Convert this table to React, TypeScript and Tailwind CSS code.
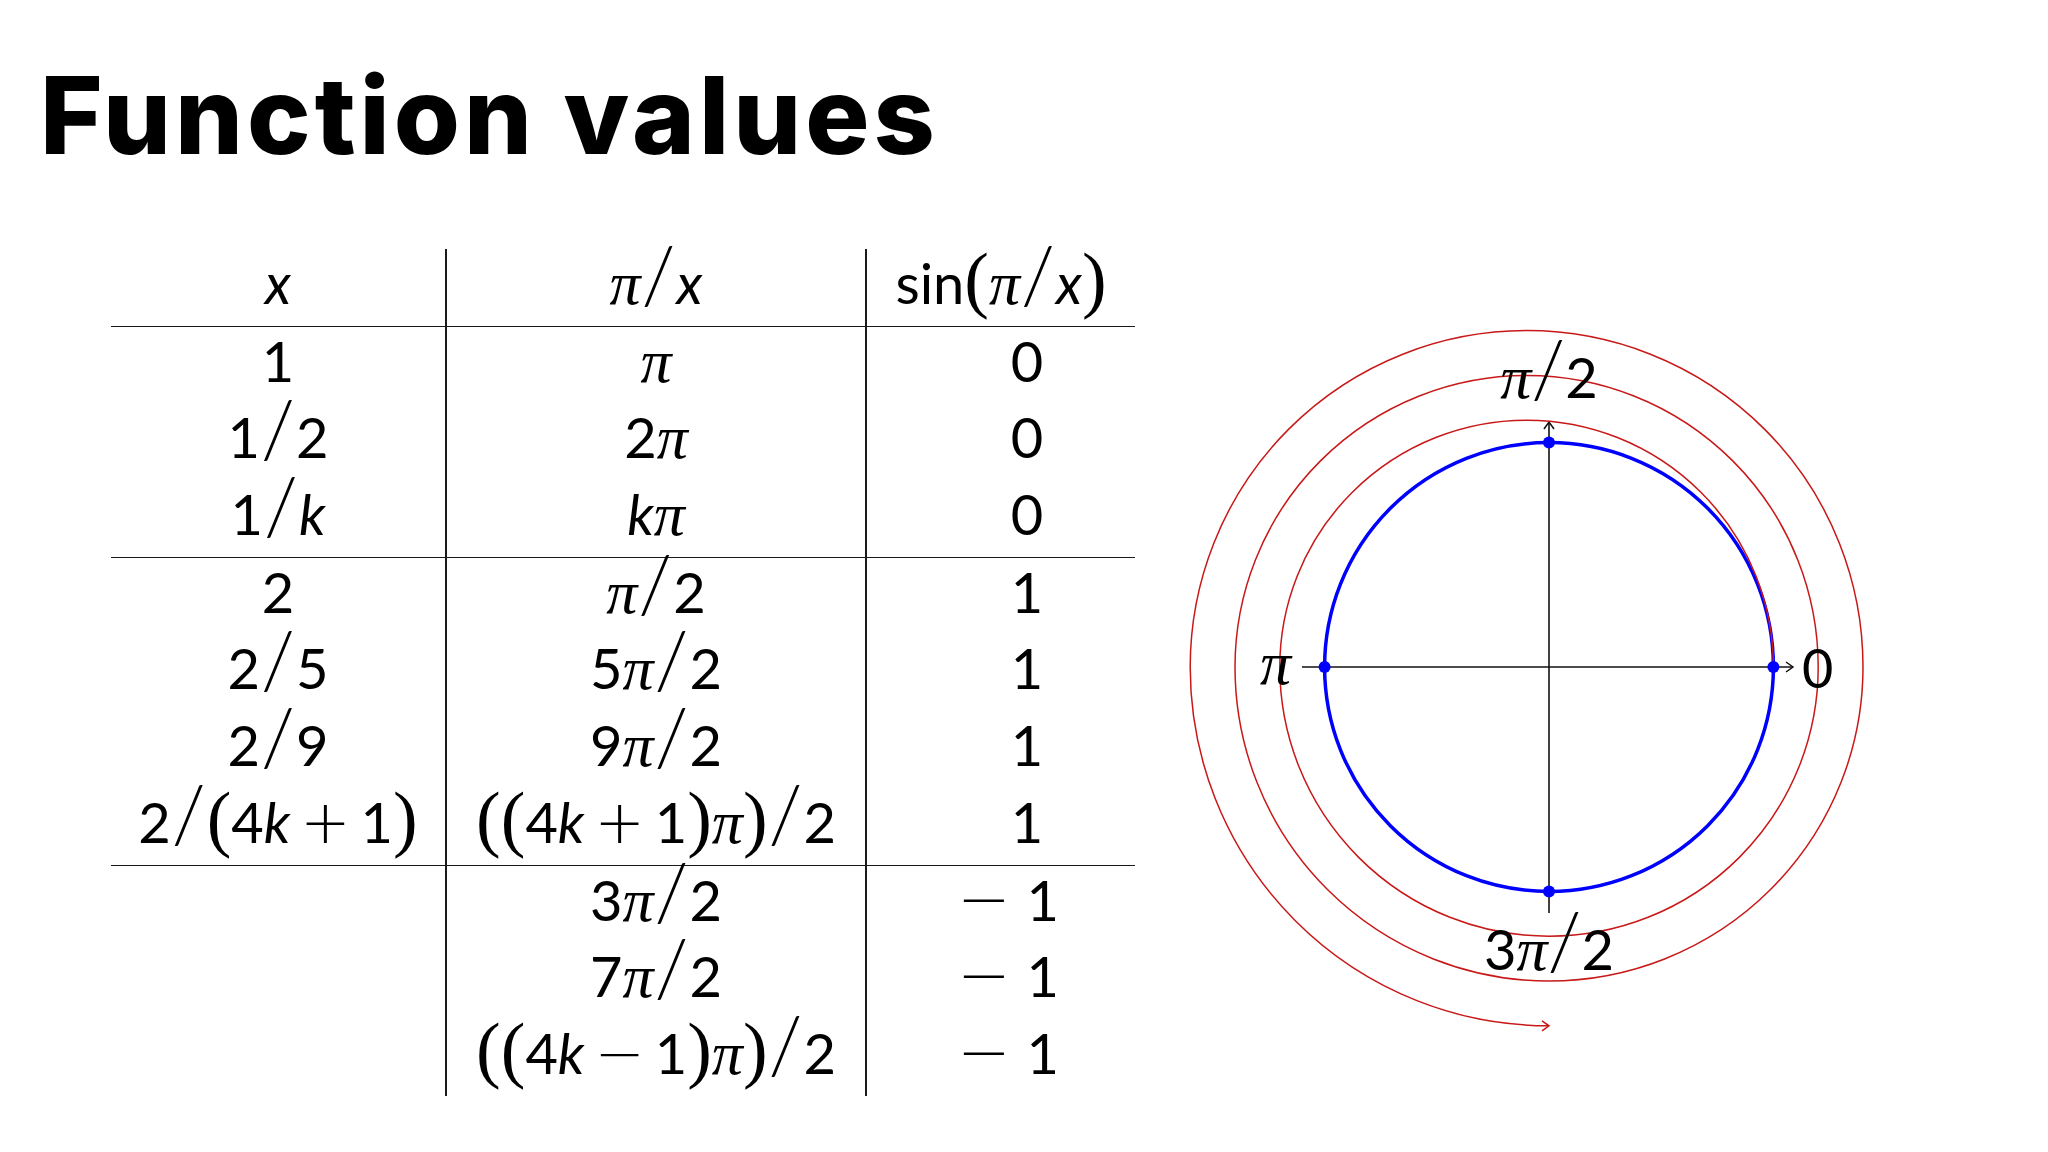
import React from "react";

type N = { children?: React.ReactNode };

const I = ({ children }: N) => <span className="italic">{children}</span>;
const Pi = () => (
  <span className="font-['Liberation_Serif',serif] italic text-[62px] leading-[0]">π</span>
);
const Sl = () => (
  <span className="font-['Lato',sans-serif] font-light text-[78px] leading-[0] mx-[1px]">/</span>
);
const L = () => (
  <span className="font-['Liberation_Serif',serif] text-[74px] leading-[0]">(</span>
);
const R = () => (
  <span className="font-['Liberation_Serif',serif] text-[74px] leading-[0]">)</span>
);
const Op = ({ children }: N) => (
  <span className="font-['DejaVu_Sans',sans-serif] font-extralight text-[60px] leading-[0] mx-[10px]">{children}</span>
);
const Neg = () => (
  <>
    <span className="font-['DejaVu_Sans',sans-serif] font-extralight text-[64px] leading-[0]">−</span>
    <span className="ml-[16px]">1</span>
  </>
);

type RowProps = {
  a?: React.ReactNode;
  b: React.ReactNode;
  c: React.ReactNode;
  cPad?: string;
  top?: boolean;
};

function Row({ a, b, c, cPad = "", top = false }: RowProps) {
  return (
    <div
      className={
        "grid grid-cols-[334px_422px_268px] h-[77px] " +
        (top ? "border-t-[1.5px] border-[#1a1a1a]" : "")
      }
    >
      <div className="text-center leading-[1.2] whitespace-nowrap">{a}</div>
      <div className="text-center leading-[1.2] whitespace-nowrap border-x-2 border-[#1a1a1a]">{b}</div>
      <div className={"text-center leading-[1.2] whitespace-nowrap " + cPad}>{c}</div>
    </div>
  );
}

const cx = 399;
const cy = 418;
const r0 = 224.4;
const r1 = 269.2;
const r2 = 314;
const r3 = 358.8;
const a1 = (r0 + r1) / 2;
const a2 = (r1 + r2) / 2;
const a3 = (r2 + r3) / 2;
const spiral = [
  `M ${cx + r0} ${cy}`,
  `A ${a1} ${a1} 0 0 0 ${cx - r1} ${cy}`,
  `A ${r1} ${r1} 0 0 0 ${cx + r1} ${cy}`,
  `A ${a2} ${a2} 0 0 0 ${cx - r2} ${cy}`,
  `A ${r2} ${r2} 0 0 0 ${cx + r2} ${cy}`,
  `A ${a3} ${a3} 0 0 0 ${cx - r3} ${cy}`,
  `A ${r3} ${r3} 0 0 0 ${cx} ${cy + r3}`,
].join(" ");

function Diagram() {
  const red = "#c81818";
  return (
    <svg width="800" height="800" viewBox="0 0 800 800" className="ml-[15px] shrink-0">
      <line x1="152" y1={cy} x2="643" y2={cy} stroke="#111" strokeWidth="1.6" />
      <polyline points="636,413 643,418 636,423" fill="none" stroke="#111" strokeWidth="1.5" />
      <line x1={cx} y1="664" x2={cx} y2="173" stroke="#111" strokeWidth="1.6" />
      <polyline points="394,180 399,173 404,180" fill="none" stroke="#111" strokeWidth="1.5" />
      <circle cx={cx} cy={cy} r={r0} fill="none" stroke="#0000ff" strokeWidth="3.5" />
      <path d={spiral} fill="none" stroke={red} strokeWidth="1.5" />
      <polyline
        points={`${cx - 7},${cy + r3 - 5} ${cx},${cy + r3} ${cx - 7},${cy + r3 + 5}`}
        fill="none"
        stroke={red}
        strokeWidth="1.5"
      />
      <circle cx={cx + r0} cy={cy} r="6" fill="#0000ff" />
      <circle cx={cx - r0} cy={cy} r="6" fill="#0000ff" />
      <circle cx={cx} cy={cy - r0} r="6" fill="#0000ff" />
      <circle cx={cx} cy={cy + r0} r="6" fill="#0000ff" />
      <text x={cx} y="149" textAnchor="middle" fontFamily="Lato" fontSize="56" fill="#000">
        <tspan fontFamily="Liberation Serif" fontStyle="italic" fontSize="62">π</tspan>
        <tspan fontWeight="300" fontSize="78">/</tspan>
        <tspan>2</tspan>
      </text>
      <text x="141" y="435" textAnchor="end" fontFamily="Liberation Serif" fontStyle="italic" fontSize="62" fill="#000">
        π
      </text>
      <text x="652" y="439" fontFamily="Lato" fontSize="54" fill="#000">
        0
      </text>
      <text x={cx} y="721" textAnchor="middle" fontFamily="Lato" fontSize="56" fill="#000">
        <tspan>3</tspan>
        <tspan fontFamily="Liberation Serif" fontStyle="italic" fontSize="62">π</tspan>
        <tspan fontWeight="300" fontSize="78">/</tspan>
        <tspan>2</tspan>
      </text>
    </svg>
  );
}

export default function App() {
  const p0 = "pl-[52px]";
  const pm = "pl-[14px]";
  return (
    <div className="w-[2048px] h-[1152px] bg-white overflow-hidden text-black">
      <h1 className="font-['Inter',sans-serif] font-extrabold text-[107px] leading-none pl-[40px] pt-[62px] tracking-[4px]">
        Function values
      </h1>
      <div className="flex items-start mt-[80px] pl-[111px]">
        <div className="w-[1024px] shrink-0 font-['Lato',sans-serif] text-[56px]">
          <Row
            a={<I>x</I>}
            b={<><Pi /><Sl /><I>x</I></>}
            c={<>sin<L /><Pi /><Sl /><I>x</I><R /></>}
          />
          <Row top a="1" b={<Pi />} c="0" cPad={p0} />
          <Row a={<>1<Sl />2</>} b={<>2<Pi /></>} c="0" cPad={p0} />
          <Row a={<>1<Sl /><I>k</I></>} b={<><I>k</I><Pi /></>} c="0" cPad={p0} />
          <Row top a="2" b={<><Pi /><Sl />2</>} c="1" cPad={p0} />
          <Row a={<>2<Sl />5</>} b={<>5<Pi /><Sl />2</>} c="1" cPad={p0} />
          <Row a={<>2<Sl />9</>} b={<>9<Pi /><Sl />2</>} c="1" cPad={p0} />
          <Row
            a={<>2<Sl /><L />4<I>k</I><Op>+</Op>1<R /></>}
            b={<><L /><L />4<I>k</I><Op>+</Op>1<R /><Pi /><R /><Sl />2</>}
            c="1"
            cPad={p0}
          />
          <Row top b={<>3<Pi /><Sl />2</>} c={<Neg />} cPad={pm} />
          <Row b={<>7<Pi /><Sl />2</>} c={<Neg />} cPad={pm} />
          <Row
            b={<><L /><L />4<I>k</I><Op>−</Op>1<R /><Pi /><R /><Sl />2</>}
            c={<Neg />}
            cPad={pm}
          />
        </div>
        <Diagram />
      </div>
    </div>
  );
}
